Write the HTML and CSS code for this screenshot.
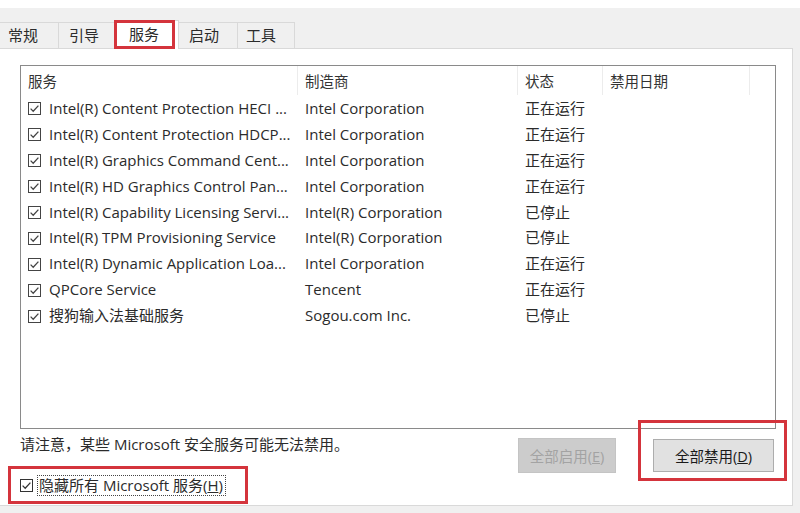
FILE: index.html
```html
<!DOCTYPE html>
<html lang="zh-CN">
<head>
  <meta charset="UTF-8" />
  <meta name="viewport" content="width=device-width, initial-scale=1.0"/>
  <title>系统配置 - 服务</title>
  <link rel="stylesheet" href="styles.css">
</head>
<body>
  <div class="dialog">
    <div class="tabs">
      <div class="tab w1">常规</div>
      <div class="tab w2">引导</div>
      <div class="tab w3 active">服务<span class="mark"></span></div>
      <div class="tab w4">启动</div>
      <div class="tab w5">工具</div>
    </div>

    <div class="panel">
      <div class="list">
        <div class="head">
          <div class="hcell">服务</div>
          <div class="hcell">制造商</div>
          <div class="hcell">状态</div>
          <div class="hcell">禁用日期</div>
          <div class="hcell"></div>
        </div>
        <div class="rows" id="rows"></div>
      </div>

      <div class="bottom">
        <div class="left">
          <p class="note">请注意，某些 Microsoft 安全服务可能无法禁用。</p>
          <div class="hide">
            <svg class="check" width="13" height="13" viewBox="0 0 13 13"><rect x="0.5" y="0.5" width="12" height="12" fill="#fff" stroke="#333"/><path d="M2.6 6.6 L5.2 9.2 L10.4 3.6" fill="none" stroke="#333" stroke-width="1.3"/></svg>
            <span class="focus">隐藏所有 Microsoft 服务(<u>H</u>)</span>
          </div>
        </div>
        <div class="buttons">
          <button class="btn off" disabled>全部启用(<u>E</u>)</button>
          <div class="btn-wrap"><button class="btn on">全部禁用(<u>D</u>)</button></div>
        </div>
      </div>
    </div>
  </div>

  <script>
    const services = [
      ['Intel(R) Content Protection HECI ...', 'Intel Corporation', '正在运行'],
      ['Intel(R) Content Protection HDCP...', 'Intel Corporation', '正在运行'],
      ['Intel(R) Graphics Command Cent...', 'Intel Corporation', '正在运行'],
      ['Intel(R) HD Graphics Control Pan...', 'Intel Corporation', '正在运行'],
      ['Intel(R) Capability Licensing Servi...', 'Intel(R) Corporation', '已停止'],
      ['Intel(R) TPM Provisioning Service', 'Intel(R) Corporation', '已停止'],
      ['Intel(R) Dynamic Application Loa...', 'Intel Corporation', '正在运行'],
      ['QPCore Service', 'Tencent', '正在运行'],
      ['搜狗输入法基础服务', 'Sogou.com Inc.', '已停止']
    ];

    const box = '<svg class="check" width="13" height="13" viewBox="0 0 13 13"><rect x="0.5" y="0.5" width="12" height="12" fill="#fff" stroke="#444"/><path d="M2.6 6.6 L5.2 9.2 L10.4 3.6" fill="none" stroke="#444" stroke-width="1.3"/></svg>';
    const rows = document.getElementById('rows');

    services.forEach(([name, maker, state]) => {
      rows.innerHTML += `<div class="row">
        <div class="cell first">${box}<span>${name}</span></div>
        <div class="cell">${maker}</div>
        <div class="cell">${state}</div>
        <div class="cell"></div>
        <div class="cell"></div>
      </div>`;
    });
  </script>
</body>
</html>
```

FILE: styles.css
```css
body {
  margin: 0;
  background-color: #fff;
  font-family: "Open Sans", "Noto Sans CJK SC", sans-serif;
  font-size: 15px;
  color: #2b2b2b;
}
.dialog {
  margin-top: 8px;
  height: 505px;
  background-color: #f0f0f0;
}
.tabs {
  display: flex;
  align-items: flex-end;
  padding-top: 12px;
  height: 28px;
}
.tab {
  box-sizing: border-box;
  height: 26px;
  margin-right: -1px;
  padding-left: 8px;
  border: 1px solid #d9d9d9;
  border-bottom: none;
  line-height: 24px;
  font-size: 15px;
  background-color: #f0f0f0;
}
.tab.w1 { width: 59px; border-left: none; }
.tab.w2 { width: 58px; padding-left: 10px; }
.tab.w3 { width: 64px; }
.tab.w4 { width: 60px; padding-left: 10px; }
.tab.w5 { width: 58px; padding-left: 8px; }
.tab.active {
  position: relative;
  z-index: 1;
  height: 29px;
  margin-bottom: -1px;
  padding-left: 13px;
  line-height: 26px;
  background-color: #fff;
}
.tab .mark {
  position: absolute;
  left: -2px;
  top: -1px;
  width: 61px;
  height: 29px;
  box-sizing: border-box;
  border: 3px solid #d4343c;
}
.panel {
  box-sizing: border-box;
  width: 793px;
  height: 458px;
  padding: 16px 0 0 20px;
  border: 1px solid #d9d9d9;
  border-left: none;
  background-color: #fff;
}
.list {
  box-sizing: border-box;
  width: 756px;
  height: 364px;
  border: 1px solid #8a8a8a;
}
.head, .row {
  display: grid;
  grid-template-columns: 277px 220px 85px 147px 1fr;
}
.head {
  height: 27px;
  margin-bottom: 3px;
}
.hcell {
  padding: 2px 0 0 7px;
  line-height: 27px;
  border-right: 1px solid #ececec;
  color: #333;
  font-size: 14.5px;
}
.hcell:last-child { border-right: none; }
.row {
  height: 25.9px;
  line-height: 25.9px;
}
.cell {
  padding-left: 7px;
  white-space: nowrap;
}
.cell.first {
  display: flex;
  align-items: center;
  gap: 8px;
}
.check { flex: none; display: block; }
.bottom {
  display: flex;
  justify-content: space-between;
  width: 756px;
}
.note {
  margin: 5px 0 0;
  line-height: 20px;
}
.hide {
  display: flex;
  align-items: center;
  gap: 4px;
  box-sizing: border-box;
  width: 240px;
  height: 38px;
  margin: 12px 0 0 -12px;
  padding-left: 9px;
  border: 3px solid #d4343c;
}
.focus {
  padding: 0 2px 0 1px;
  line-height: 19px;
  border: 1px dotted #444;
}
.buttons {
  display: flex;
  align-items: flex-start;
  gap: 37px;
  margin: 9px 2px 0 0;
}
.btn {
  box-sizing: border-box;
  font-family: inherit;
  font-size: 14.5px;
  padding: 0;
}
.btn.off {
  width: 98px;
  height: 35px;
  border: 1px solid #c4c4c4;
  background-color: #cccccc;
  color: #a3a3a3;
}
.btn.on {
  width: 121px;
  height: 33px;
  margin-top: 1px;
  border: 1px solid #adadad;
  background-color: #e1e1e1;
  color: #1a1a1a;
}
.btn-wrap {
  position: relative;
}
.btn-wrap::after {
  content: "";
  position: absolute;
  left: -15px;
  right: -13px;
  top: -18px;
  bottom: -9px;
  border: 3px solid #d4343c;
}
```
